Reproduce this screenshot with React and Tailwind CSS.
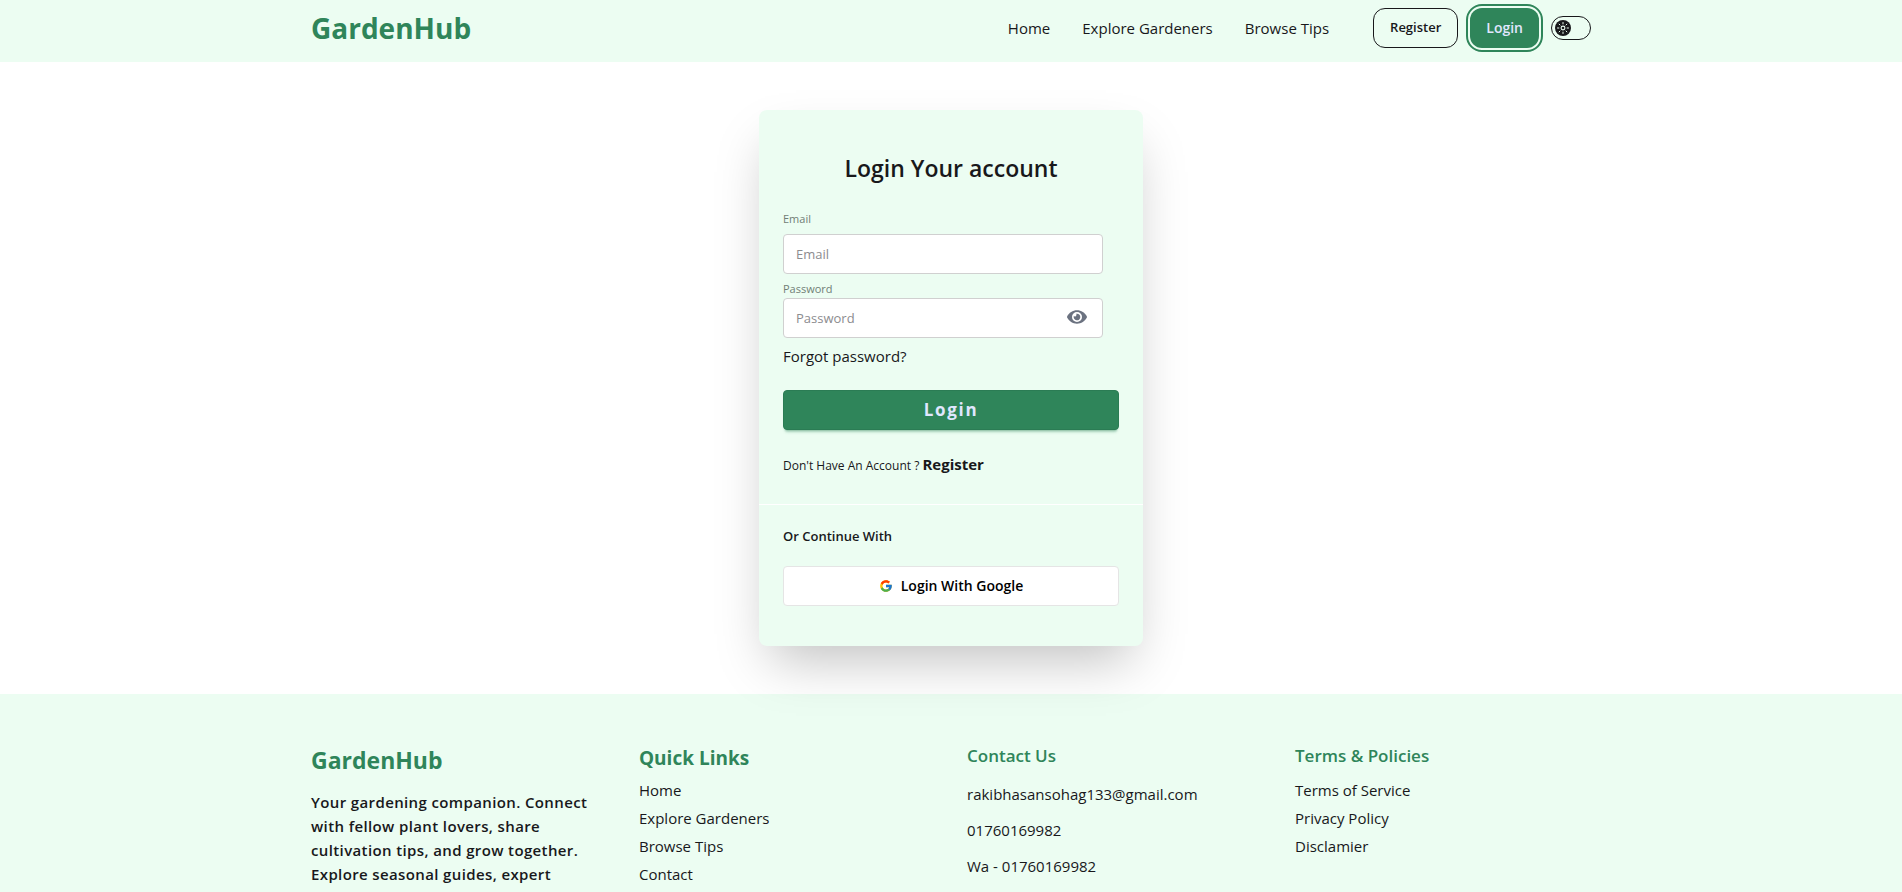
import { useState } from "react";
import { FaEye, FaEyeSlash } from "react-icons/fa";
import { FcGoogle } from "react-icons/fc";

const navLinks = ["Home", "Explore Gardeners", "Browse Tips"];
const quickLinks = ["Home", "Explore Gardeners", "Browse Tips", "Contact"];
const policies = ["Terms of Service", "Privacy Policy", "Disclamier"];
const contacts = ["rakibhasansohag133@gmail.com", "01760169982", "Wa - 01760169982"];

function SunIcon() {
  return (
    <svg viewBox="0 0 16 16" className="size-4" fill="none" stroke="#ecfdf2" strokeLinecap="round" aria-hidden="true">
      <circle cx="8" cy="8" r="1.9" strokeWidth="1.1" />
      <path strokeWidth="1" d="M8 2.5v1.4M8 12.1v1.4M2.5 8h1.4M12.1 8h1.4M4.1 4.1l.9.9M11 11l.9.9M4.1 11.9l.9-.9M11 5l.9-.9" />
    </svg>
  );
}

function ThemeToggle() {
  const [dark, setDark] = useState(false);
  return (
    <label className="relative flex h-6 w-10 cursor-pointer items-center rounded-full border border-[#18181b] p-[3px]">
      <input type="checkbox" aria-label="Dark theme" className="peer absolute inset-0 cursor-pointer opacity-0" checked={dark} onChange={(e) => setDark(e.target.checked)} />
      <span className="flex size-4 items-center justify-center rounded-full bg-[#18181b] peer-checked:ml-auto">
        <SunIcon />
      </span>
    </label>
  );
}

function Header() {
  return (
    <header className="bg-[#ecfdf2]">
      <div className="mx-auto flex h-[62px] max-w-7xl items-center justify-between pb-1.5">
        <a href="#" className="text-[28px] leading-9 font-bold text-[#2f855a]">GardenHub</a>
        <div className="flex items-center gap-3">
          <nav className="mr-8 flex gap-8 text-[15px] leading-6">
            {navLinks.map((t) => (
              <a key={t} href="#">{t}</a>
            ))}
          </nav>
          <button type="button" className="h-10 rounded-xl border border-[#18181b] px-4 text-[13px] font-semibold">Register</button>
          <button type="button" className="h-10 rounded-xl bg-[#2f855a] px-4 text-sm font-semibold text-[#e0e7ff] outline-2 outline-offset-2 outline-[#2f855a]">Login</button>
          <ThemeToggle />
        </div>
      </div>
    </header>
  );
}

function LoginCard() {
  const [visible, setVisible] = useState(false);
  return (
    <section className="relative z-10 mx-auto my-12 w-full max-w-sm rounded-lg bg-[#ecfdf2] shadow-2xl">
      <form className="px-6 pt-10 pb-[26px]" onSubmit={(e) => e.preventDefault()}>
        <h1 className="text-center text-[23px] leading-9 font-semibold">Login Your account</h1>
        <div className="mt-6 w-80">
          <label htmlFor="email" className="block text-[11px] leading-[18px] text-[#717d76]">Email</label>
          <input id="email" type="email" placeholder="Email" className="mt-1.5 block h-10 w-full rounded border border-[#d0d0d0] bg-white px-3 text-[13px] placeholder:text-[#8c8c8f]" />
          <label htmlFor="password" className="mt-1.5 block text-[11px] leading-[18px] text-[#717d76]">Password</label>
          <div className="relative">
            <input id="password" type={visible ? "text" : "password"} placeholder="Password" className="block h-10 w-full rounded border border-[#d0d0d0] bg-white px-3 pr-12 text-[13px] placeholder:text-[#8c8c8f]" />
            <button type="button" aria-label="Show password" onClick={() => setVisible(!visible)} className="absolute top-0 right-4 bottom-0.5 text-xl text-[#6b7280]">
              {visible ? <FaEyeSlash /> : <FaEye />}
            </button>
          </div>
        </div>
        <a href="#" className="mt-1.5 block text-[15px] leading-6">Forgot password?</a>
        <button type="submit" className="mt-[22px] block h-10 w-full rounded border border-[#2b7c54] bg-[#2f855a] text-[17px] font-bold tracking-widest text-[#e0e7ff] shadow-[0_3px_2px_-2px_#2f855a4d,0_4px_3px_-2px_#2f855a4d]">Login</button>
        <p className="mt-[22px] text-xs leading-6">
          Don't Have An Account ? <a href="#" className="text-[15px] leading-6 font-bold">Register</a>
        </p>
      </form>
      <div className="border-t border-white px-6 pt-5 pb-10">
        <h2 className="text-[13px] leading-[22px] font-semibold">Or Continue With</h2>
        <button type="button" className="mt-[19px] flex h-10 w-full items-center justify-center gap-2 rounded border border-[#e5e5e5] bg-white text-sm font-semibold text-black">
          <FcGoogle className="size-3.5" />
          Login With Google
        </button>
      </div>
    </section>
  );
}

function FooterLinks({ items }) {
  return (
    <ul className="space-y-1">
      {items.map((t) => (
        <li key={t}>
          <a href="#">{t}</a>
        </li>
      ))}
    </ul>
  );
}

function Footer() {
  return (
    <footer className="grow bg-[#ecfdf2] pt-12">
      <div className="mx-auto grid max-w-7xl grid-cols-4 gap-8 text-[15px] leading-6 text-[#18181b]">
        <div>
          <h2 className="text-[23px] leading-9 font-bold text-[#2f855a]">GardenHub</h2>
          <p className="mt-3 font-semibold tracking-wide">
            Your gardening companion. Connect with fellow plant lovers, share cultivation tips, and grow together. Explore seasonal guides, expert
          </p>
        </div>
        <div>
          <h3 className="mb-1 text-[19px] leading-8 font-bold text-[#2f855a]">Quick Links</h3>
          <FooterLinks items={quickLinks} />
        </div>
        <div>
          <h3 className="text-[17px] leading-7 font-semibold text-[#2f855a]">Contact Us</h3>
          {contacts.map((t) => (
            <p key={t} className="mt-3">{t}</p>
          ))}
        </div>
        <div>
          <h3 className="mb-2 text-[17px] leading-7 font-semibold text-[#2f855a]">Terms & Policies</h3>
          <FooterLinks items={policies} />
        </div>
      </div>
    </footer>
  );
}

export default function App() {
  return (
    <div className="flex min-h-screen flex-col bg-white font-['Open_Sans','Noto_Sans',sans-serif] text-base text-[#18181b]">
      <Header />
      <main>
        <LoginCard />
      </main>
      <Footer />
    </div>
  );
}
